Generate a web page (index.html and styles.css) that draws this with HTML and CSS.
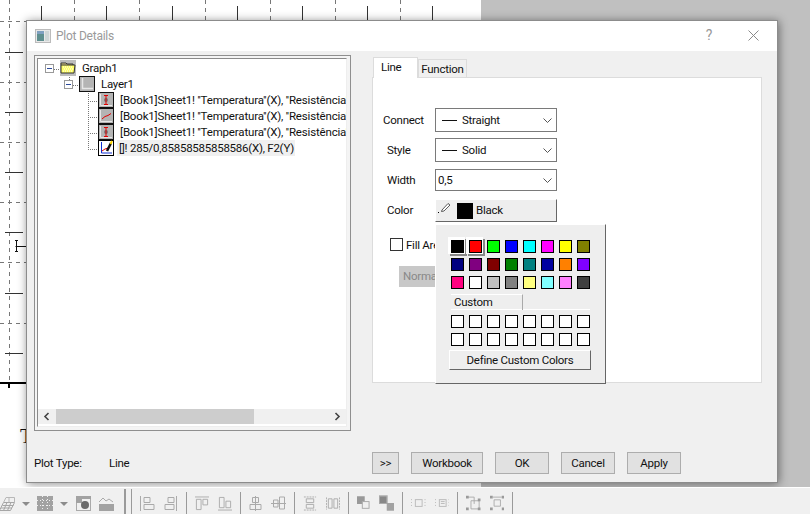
FILE: index.html
```html
<!DOCTYPE html>
<html lang="pt">
<head>
<meta charset="utf-8">
<title>Plot Details</title>
<link rel="stylesheet" href="styles.css">
</head>
<body>
<div class="desktop">
  <div class="workspace">
    <div class="canvas">
      <svg class="plot" width="481" height="487" viewBox="0 0 481 487">
        <g stroke="#777" stroke-dasharray="4 4" fill="none">
          <path d="M9.5 0V383M74.5 0V20M139.5 0V20M205.5 0V20M270.5 0V20M335.5 0V20M400.5 0V20"/>
          <path d="M0 21.5H26M0 82.5H26M0 142.5H26M0 202.5H26M0 262.5H26M0 323.5H26"/>
        </g>
        <g stroke="#333" fill="none">
          <path d="M41.5 6V20M106.5 6V20M172.5 6V20M237.5 6V20M302.5 6V20M367.5 6V20M432.5 6V20"/>
          <path d="M5 52.5H23M5 112.5H23M5 172.5H23M5 232.5H23M5 293.5H23M5 353.5H23"/>
          <path d="M15.5 246.5H26M16.5 240V252M15 240.5H18M15 251.5H18" stroke="#111"/>
        </g>
        <path d="M0 383H26" stroke="#000" stroke-width="2"/>
        <path d="M9 383V388" stroke="#000" stroke-width="2"/>
      </svg>
      <span class="axis-title">T</span>
    </div>

    <div class="dialog">
      <div class="titlebar">
        <svg class="app-icon" width="16" height="14" viewBox="0 0 16 14"><rect x=".5" y=".5" width="15" height="13" fill="#e8e8e8" stroke="#bbb"/><rect x="2" y="2" width="7" height="10" fill="#5f8f8f"/><rect x="2" y="2" width="7" height="3" fill="#7fa0c0"/><rect x="10" y="2" width="4" height="10" fill="#cfd6d6"/></svg>
        <span class="title-text">Plot Details</span>
        <span class="title-help">?</span>
        <svg class="title-close" width="11" height="11" viewBox="0 0 11 11"><path d="M.5 .5L10.5 10.5M10.5 .5L.5 10.5" stroke="#8a8a8a" fill="none"/></svg>
      </div>

      <div class="dialog-body">
        <div class="main-row">
          <div class="tree-frame">
            <div class="tree">
              <svg class="tree-lines" width="120" height="100" viewBox="0 0 120 100">
                <g stroke="#777" stroke-dasharray="1 1" fill="none">
                  <path d="M16 9.5H23M31.5 17V21M35 25.5H42M50.5 33V89M50 41.5H61M50 57.5H61M50 73.5H61M50 89.5H61"/>
                </g>
              </svg>
              <div class="tree-rows">
                <div class="row indent-0">
                  <span class="expander"></span>
                  <svg class="node" width="16" height="16" viewBox="0 0 16 16"><rect width="16" height="16" fill="#bdbdbd"/><path d="M1 5V3H6L7 4H13V5" fill="#e8d98a" stroke="#333"/><path d="M1 13V5H15L14 13Z" fill="#ffff66" stroke="#333"/><path d="M3 7H13M4 9H13M3 11H12" stroke="#fff" stroke-dasharray="1 1"/></svg>
                  <span class="label">Graph1</span>
                </div>
                <div class="row indent-1">
                  <span class="expander"></span>
                  <svg class="node" width="16" height="16" viewBox="0 0 16 16"><rect x=".5" y=".5" width="15" height="15" fill="#b4b4b4" stroke="#111"/><path d="M3.5 2V12.5H14" stroke="#e6e6e6" fill="none" stroke-width="1.5"/></svg>
                  <span class="label">Layer1</span>
                </div>
                <div class="row indent-2">
                  <svg class="node" width="16" height="16" viewBox="0 0 16 16"><rect x=".5" y=".5" width="15" height="15" fill="#b4b4b4" stroke="#111"/><path d="M2.5 2V13.5H14" stroke="#e6e6e6" fill="none"/><circle cx="8" cy="8" r="2" fill="#777"/><path d="M8 3.5V12.5M6 3.5H10M6 12.5H10" stroke="#e00000" fill="none"/></svg>
                  <span class="label wide-text">[Book1]Sheet1! ''Temperatura''(X), ''Resistência''(Y)</span>
                </div>
                <div class="row indent-2">
                  <svg class="node" width="16" height="16" viewBox="0 0 16 16"><rect x=".5" y=".5" width="15" height="15" fill="#b4b4b4" stroke="#111"/><path d="M2.5 2V13.5H14" stroke="#e6e6e6" fill="none"/><path d="M4 11L7 8.5L10 7.5L13 5.5" stroke="#e00000" fill="none"/></svg>
                  <span class="label wide-text">[Book1]Sheet1! ''Temperatura''(X), ''Resistência''(Y)</span>
                </div>
                <div class="row indent-2">
                  <svg class="node" width="16" height="16" viewBox="0 0 16 16"><rect x=".5" y=".5" width="15" height="15" fill="#b4b4b4" stroke="#111"/><path d="M2.5 2V13.5H14" stroke="#e6e6e6" fill="none"/><circle cx="8" cy="8" r="2" fill="#777"/><path d="M8 3.5V12.5M6 3.5H10M6 12.5H10" stroke="#e00000" fill="none"/></svg>
                  <span class="label wide-text">[Book1]Sheet1! ''Temperatura''(X), ''Resistência''(Y)</span>
                </div>
                <div class="row indent-2">
                  <svg class="node" width="16" height="16" viewBox="0 0 16 16"><rect x=".5" y=".5" width="15" height="15" fill="#fff" stroke="#000" stroke-width="1"/><path d="M3.5 2V13H14" stroke="#1030d0" fill="none"/><path d="M4 11L7 9L10 8" stroke="#e00000" fill="none"/><path d="M9 11L13 3" stroke="#111" stroke-width="2.5"/><path d="M12.5 4L14 1" stroke="#ffd800" stroke-width="2"/></svg>
                  <span class="label selected">[]! 285/0,85858585858586(X), F2(Y)</span>
                </div>
              </div>
              <div class="hscroll">
                <svg class="sb-arrow" width="7" height="9" viewBox="0 0 7 9"><path d="M5.5 1L2 4.5L5.5 8" stroke="#444" stroke-width="1.6" fill="none"/></svg>
                <div class="sb-track"><div class="sb-thumb"></div></div>
                <svg class="sb-arrow" width="7" height="9" viewBox="0 0 7 9"><path d="M1.5 1L5 4.5L1.5 8" stroke="#444" stroke-width="1.6" fill="none"/></svg>
              </div>
            </div>
          </div>

          <div class="tabs-area">
            <div class="tab-strip">
              <div class="tab active">Line</div>
              <div class="tab">Function</div>
            </div>
            <div class="tab-panel">
              <div class="form">
                <label class="form-label l-connect">Connect</label>
                <div class="combo"><span class="dash"></span><span class="combo-text">Straight</span><svg class="chev" width="9" height="5" viewBox="0 0 9 5"><path d="M.5 .5L4.5 4.5L8.5 .5" stroke="#555" fill="none"/></svg></div>
                <label class="form-label">Style</label>
                <div class="combo"><span class="dash"></span><span class="combo-text">Solid</span><svg class="chev" width="9" height="5" viewBox="0 0 9 5"><path d="M.5 .5L4.5 4.5L8.5 .5" stroke="#555" fill="none"/></svg></div>
                <label class="form-label l-short">Width</label>
                <div class="combo combo-short"><span class="combo-value">0,5</span><svg class="chev" width="9" height="5" viewBox="0 0 9 5"><path d="M.5 .5L4.5 4.5L8.5 .5" stroke="#555" fill="none"/></svg></div>
                <label class="form-label l-short">Color</label>
                <div class="color-btn">
                  <svg class="pencil" width="14" height="12" viewBox="0 0 14 12"><path d="M4 8L10 1.5L12 3L6 9L3.5 9.5Z" fill="#fff" stroke="#333" stroke-width=".8"/><path d="M0 10.5H1" stroke="#000"/></svg>
                  <span class="color-swatch"></span>
                  <span class="color-name">Black</span>
                </div>
              </div>
              <div class="fill-row">
                <span class="checkbox"></span>
                <span>Fill Area</span>
              </div>
              <div class="normal-btn">Normal</div>
            </div>
          </div>
        </div>

        <div class="footer">
          <div class="plot-type"><span class="pt-label">Plot Type:</span><span>Line</span></div>
          <div class="actions">
            <div class="btn btn-more">&gt;&gt;</div>
            <div class="btn btn-workbook">Workbook</div>
            <div class="btn">OK</div>
            <div class="btn">Cancel</div>
            <div class="btn">Apply</div>
          </div>
        </div>
      </div>

      <div class="popup">
        <div class="swatches">
          <span class="sw c00 raised"></span><span class="sw c01 raised"></span><span class="sw c02"></span><span class="sw c03"></span><span class="sw c04"></span><span class="sw c05"></span><span class="sw c06"></span><span class="sw c07"></span>
          <span class="sw c08"></span><span class="sw c09"></span><span class="sw c10"></span><span class="sw c11"></span><span class="sw c12"></span><span class="sw c13"></span><span class="sw c14"></span><span class="sw c15"></span>
          <span class="sw c16"></span><span class="sw c17"></span><span class="sw c18"></span><span class="sw c19"></span><span class="sw c20"></span><span class="sw c21"></span><span class="sw c22"></span><span class="sw c23"></span>
        </div>
        <div class="custom-head"><span class="custom-tab">Custom</span></div>
        <div class="swatches custom">
          <span class="sw"></span><span class="sw"></span><span class="sw"></span><span class="sw"></span><span class="sw"></span><span class="sw"></span><span class="sw"></span><span class="sw"></span>
          <span class="sw"></span><span class="sw"></span><span class="sw"></span><span class="sw"></span><span class="sw"></span><span class="sw"></span><span class="sw"></span><span class="sw"></span>
        </div>
        <div class="define-btn">Define Custom Colors</div>
      </div>
    </div>
  </div>

  <div class="toolbar">
    <div class="tb-group g-first">
      <svg width="16" height="15" viewBox="0 0 16 15" class="i1"><path d="M.5 14.5L4.5 6.5H15.5L11.5 14.5ZM2 12H13M3.5 9.500H14.500M8 6.500L4.500 14.500M12 6.500L8.500 14.500" fill="none" stroke="#a6a6a6"/><path d="M4.500 6.500L7 1.500H15.500V6.500M10 1.500V6.500" fill="none" stroke="#b8b8b8"/></svg>
      <span class="tb-arrow"></span>
      <svg width="16" height="15" viewBox="0 0 16 15" class="i2"><rect width="16" height="15" fill="#a2a2a2"/><path d="M0 4.5H16M0 9.5H16M5.5 0V15M10.5 0V15" stroke="#f0f0f0" stroke-dasharray="1 2"/></svg>
      <span class="tb-arrow"></span>
      <svg width="15" height="15" viewBox="0 0 15 15" class="i3"><rect x=".5" y=".5" width="14" height="14" fill="#f0f0f0" stroke="#aaa"/><rect width="15" height="3" fill="#a2a2a2"/><rect x="0" y="3" width="6" height="4" fill="#a2a2a2"/><circle cx="9" cy="9" r="4" fill="#6a6a6a"/></svg>
      <svg width="15" height="14" viewBox="0 0 15 14" class="i4"><path d="M0 5L4 1L7 4L10 2L14 5" fill="none" stroke="#aaa"/><rect y="7" width="15" height="7" fill="#a2a2a2"/></svg>
    </div>
    <div class="tb-group g-double"></div>
    <div class="tb-group wide">
      <svg width="15" height="15" viewBox="0 0 15 15" class="al"><path d="M.5 0V15M4 1.5H10V6.5H4ZM4 8.5H14V13.5H4Z" fill="#f0f0f0" stroke="#aaa"/></svg>
      <svg width="13" height="15" viewBox="0 0 13 15" class="al"><path d="M12.5 0V15M4 1.5H10V6.5H4ZM1 8.5H10V13.5H1Z" fill="#f0f0f0" stroke="#aaa"/></svg>
    </div>
    <div class="tb-group">
      <svg width="15" height="15" viewBox="0 0 15 15" class="al"><path d="M0 .5H15M1.5 3H6.5V14H1.5ZM8.5 3H13.5V9H8.5Z" fill="#f0f0f0" stroke="#aaa"/></svg>
      <svg width="15" height="15" viewBox="0 0 15 15" class="al"><path d="M0 14.5H15M1.5 1H6.5V12H1.5ZM8.5 5H13.5V12H8.5Z" fill="#f0f0f0" stroke="#aaa"/></svg>
    </div>
    <div class="tb-group">
      <svg width="13" height="15" viewBox="0 0 13 15" class="al"><path d="M6.5 0V15M3.5 1.5H9.5V6.5H3.5ZM1 8.5H12V13.5H1Z" fill="#f0f0f0" stroke="#aaa"/></svg>
      <svg width="15" height="15" viewBox="0 0 15 15" class="al"><path d="M0 7.5H15M2.5 4H7V11H2.5ZM8.5 1H13.5V13H8.5Z" fill="none" stroke="#aaa"/></svg>
    </div>
    <div class="tb-group">
      <svg width="15" height="15" viewBox="0 0 15 15" class="al"><path d="M1 .5H14M1 14.5H14" stroke="#aaa" stroke-dasharray="2 1"/><path d="M3.5 2.5H11.5V6.5H3.5ZM3.5 8.5H11.5V12.5H3.5Z" fill="none" stroke="#aaa"/></svg>
      <svg width="15" height="15" viewBox="0 0 15 15" class="al"><path d="M.5 1V14M14.5 1V14" stroke="#aaa" stroke-dasharray="2 1"/><path d="M2.5 2.5H6.5V12.5H2.5ZM8.5 2.5H12.5V12.5H8.5Z" fill="none" stroke="#aaa"/></svg>
    </div>
    <div class="tb-group">
      <svg width="13" height="15" viewBox="0 0 13 15" class="al"><rect width="8" height="8" fill="#999"/><rect x="5.5" y="5.5" width="7" height="7" fill="#f0f0f0" stroke="#aaa"/></svg>
      <svg width="16" height="16" viewBox="0 0 16 16" class="al"><rect x=".5" y=".5" width="8" height="8" fill="#f0f0f0" stroke="#aaa"/><rect x="1" y="1" width="7" height="7" fill="#888"/><rect x="8" y="8" width="8" height="8" fill="#a2a2a2"/></svg>
    </div>
    <div class="tb-group wide">
      <svg width="15" height="15" viewBox="0 0 15 15" class="al"><rect x="4.5" y="3.5" width="7" height="7" fill="none" stroke="#bbb"/><path d="M.5 3V11M14.5 3V11" stroke="#bbb" stroke-dasharray="1 2"/></svg>
      <svg width="15" height="15" viewBox="0 0 15 15" class="al"><rect x="4.5" y="3.5" width="7" height="7" fill="none" stroke="#bbb"/><path d="M6 5.5H10M6 7.5H10" stroke="#bbb"/><path d="M.5 3V11M14.5 3V11" stroke="#bbb" stroke-dasharray="1 2"/></svg>
    </div>
    <div class="tb-group wide">
      <svg width="16" height="16" viewBox="0 0 16 16" class="al"><path d="M1.5 1.5H9V9M5.5 5.5H14.5V14.5H5.5Z" fill="none" stroke="#aaa"/><path d="M0 0H3V3H0ZM13 3H16V6H13ZM0 13H3V16H0ZM13 13H16V16H13Z" fill="#9a9a9a"/></svg>
      <svg width="16" height="16" viewBox="0 0 16 16" class="al"><path d="M3 1.5H13M4.5 4.5H11.5V11.5H4.5Z" fill="none" stroke="#aaa"/><path d="M0 0H3V3H0ZM13 0H16V3H13ZM0 13H3V16H0ZM13 13H16V16H13Z" fill="#9a9a9a"/></svg>
    </div>
  </div>
</div>
</body>
</html>
```

FILE: styles.css
```css
* { box-sizing: border-box; }
html, body { margin: 0; padding: 0; }
body {
  font-family: Roboto, "Liberation Sans", sans-serif;
  font-size: 11.5px;
  letter-spacing: -.25px;
  color: #111;
}
.desktop {
  width: 810px;
  height: 514px;
  overflow: hidden;
  display: flex;
  flex-direction: column;
  background: #f0f0f0;
}
.workspace {
  position: relative;
  height: 487px;
  flex: none;
  background: #c0c0c0;
  overflow: hidden;
}
.canvas {
  position: relative;
  width: 481px;
  height: 487px;
  background: #fff;
  overflow: hidden;
}
.plot { display: block; }
.axis-title {
  position: absolute;
  left: 20px;
  top: 424px;
  font-family: "Liberation Serif", serif;
  font-size: 21px;
  color: #111;
}

/* dialog */
.dialog {
  position: absolute;
  left: 26px;
  top: 20px;
  width: 752px;
  height: 463px;
  background: #f0f0f0;
  border: 1px solid #8c8c8c;
  box-shadow: 1px 1px 9px rgba(0, 0, 0, .45);
  display: flex;
  flex-direction: column;
}
.titlebar {
  flex: none;
  height: 30px;
  background: #fff;
  display: flex;
  align-items: center;
  padding: 0 18px 0 8px;
}
.app-icon { flex: none; }
.title-text { margin-left: 5px; color: #9a9a9a; font-size: 12px; }
.title-help { margin: -2px 36px 0 auto; color: #999; font-size: 14px; }
.title-close { flex: none; margin-top: -2px; }
.dialog-body {
  flex: 1;
  padding: 4px 15px 0 7px;
  display: flex;
  flex-direction: column;
}
.main-row { display: flex; gap: 21px; height: 376px; flex: none; }

/* tree */
.tree-frame {
  width: 317px;
  flex: none;
  border: 1px solid #8f8f8f;
  padding: 2px 3px 3px 2px;
  background: #f4f4f4;
}
.tree {
  position: relative;
  height: 100%;
  border: 1px solid #8a8a8a;
  border-right-color: #eee;
  border-bottom-color: #eee;
  background: #fff;
  display: flex;
  flex-direction: column;
  overflow: hidden;
}
.tree-lines { position: absolute; left: 0; top: 1px; }
.tree-rows {
  position: relative;
  flex: 1;
  padding-top: 1px;
  overflow: hidden;
}
.row { height: 16px; display: flex; align-items: center; white-space: nowrap; }
.indent-0 { padding-left: 7px; }
.indent-1 { padding-left: 26px; }
.indent-2 { padding-left: 60px; }
.expander {
  position: relative;
  flex: none;
  width: 9px;
  height: 9px;
  margin-right: 6px;
  border: 1px solid #999;
  background: #fff;
}
.expander::after {
  content: "";
  position: absolute;
  left: 1px;
  top: 3px;
  width: 5px;
  height: 1px;
  background: #2b4a9b;
}
.node { flex: none; position: relative; }
.label { margin-left: 5px; padding-left: 1px; line-height: 16px; }
.wide-text { letter-spacing: -.17px; }
.selected { background: #f0f0f0; margin-left: 3px; padding: 0 1px 0 2px; }
.hscroll {
  flex: none;
  height: 15px;
  margin-bottom: 2px;
  background: #f0f0f0;
  display: flex;
  align-items: center;
  padding: 0 5px;
}
.sb-arrow { flex: none; }
.sb-track { flex: 1; height: 15px; margin: 0 2px 0 6px; }
.sb-thumb { width: 198px; height: 15px; background: #cdcdcd; }

/* tabs */
.tabs-area { width: 390px; flex: none; padding-top: 2px; }
.tab-strip { display: flex; align-items: flex-end; height: 21px; padding-left: 1px; position: relative; z-index: 1; }
.tab {
  height: 18px;
  padding: 0 2px;
  border: 1px solid #dcdcdc;
  border-bottom: 0;
  background: #f0f0f0;
  line-height: 18px;
  width: 49px;
  text-align: center;
  margin-bottom: 1px;
}
.tab.active {
  width: 45px;
  height: 21px;
  background: #fff;
  line-height: 18px;
  margin-bottom: 0;
  text-align: left;
  padding-left: 7px;
}
.tab-panel {
  height: 306px;
  margin-top: -1px;
  background: #fff;
  border: 1px solid #dcdcdc;
  position: relative;
  padding: 30px 0 0 10px;
}
.form {
  display: grid;
  grid-template-columns: 52px 122px;
  grid-template-rows: 24px 25px 24px 23px;
  row-gap: 6px;
  align-items: start;
}
.form-label { padding-left: 4px; white-space: nowrap; line-height: 24px; }
.l-connect { padding-left: 0; }
.l-short { line-height: 22px; }
.combo {
  height: 24px;
  border: 1px solid #7a7a7a;
  background: #fff;
  display: flex;
  align-items: center;
  padding: 0 4px 0 6px;
}
.combo-short { height: 22px; padding-left: 2px; }
.dash { width: 15px; height: 1px; background: #111; flex: none; }
.combo-text { margin-left: 5px; }
.chev { margin-left: auto; flex: none; }
.color-btn {
  height: 23px;
  border: 1px solid;
  border-color: #fff #666 #666 #fff;
  background: #eee;
  display: flex;
  align-items: center;
  padding-left: 2px;
}
.pencil { flex: none; margin-top: -6px; }
.color-swatch { width: 16px; height: 16px; background: #000; margin: 0 3px 0 5px; flex: none; }
.color-name { margin-top: -2px; }
.fill-row {
  display: flex;
  align-items: center;
  gap: 3px;
  height: 13px;
  margin: 16px 0 0 7px;
  white-space: nowrap;
}
.checkbox { width: 13px; height: 13px; border: 1px solid #333; background: #fff; flex: none; }
.normal-btn {
  width: 60px;
  height: 21px;
  margin: 15px 0 0 16px;
  background: #c8c8c8;
  color: #888;
  line-height: 21px;
  padding-left: 4px;
}

/* footer */
.footer {
  margin-top: 21px;
  height: 22px;
  display: flex;
  align-items: center;
}
.plot-type { display: flex; width: 338px; }
.pt-label { width: 75px; }
.actions { display: flex; gap: 12px; }
.btn {
  width: 54px;
  height: 22px;
  background: #e1e1e1;
  border: 1px solid #adadad;
  text-align: center;
  line-height: 20px;
}
.btn-more { width: 27px; }
.btn-workbook { width: 72px; }

/* colour popup */
.popup {
  position: absolute;
  left: 408px;
  top: 203px;
  width: 171px;
  height: 160px;
  background: #eee;
  border: 1px solid;
  border-color: #fff #666 #666 #fff;
  padding: 15px 0 0 15px;
}
.swatches {
  display: grid;
  grid-template-columns: repeat(8, 13px);
  grid-auto-rows: 13px;
  gap: 5px;
}
.sw { border: 1px solid #000; background: #fff; }
.raised { box-shadow: -1px -1px 0 2px #fff, 1px 1px 0 2px #888; }
.c00 { background: #000; }
.c01 { background: #f00; }
.c02 { background: #0f0; }
.c03 { background: #00f; }
.c04 { background: #0ff; }
.c05 { background: #f0f; }
.c06 { background: #ff0; }
.c07 { background: #808000; }
.c08 { background: #000080; }
.c09 { background: #800080; }
.c10 { background: #800000; }
.c11 { background: #008000; }
.c12 { background: #008080; }
.c13 { background: #0000a0; }
.c14 { background: #ff8000; }
.c15 { background: #8000ff; }
.c16 { background: #ff0080; }
.c17 { background: #fff; }
.c18 { background: #c0c0c0; }
.c19 { background: #808080; }
.c20 { background: #ffff80; }
.c21 { background: #80ffff; }
.c22 { background: #ff80ff; }
.c23 { background: #404040; }
.custom-head {
  width: 139px;
  height: 16px;
  margin-top: 5px;
  border-bottom: 1px solid #fff;
}
.custom-tab {
  display: block;
  width: 72px;
  height: 16px;
  padding-left: 3px;
  line-height: 15px;
  border-top: 1px solid #fff;
  border-right: 1px solid #aaa;
}
.custom { margin-top: 5px; }
.define-btn {
  width: 142px;
  height: 20px;
  margin: 4px 0 0 -2px;
  border: 1px solid;
  border-color: #fff #666 #666 #fff;
  text-align: center;
  line-height: 18px;
  background: #eee;
}

/* toolbar */
.toolbar {
  position: relative;
  flex: 1;
  border-top: 1px solid #fff;
  background: #f0f0f0;
  display: flex;
  align-items: flex-end;
}
.tb-group {
  height: 22px;
  border-right: 1px solid #9a9a9a;
  display: flex;
  align-items: center;
  gap: 9px;
  padding: 0 8px;
  width: 54px;
  flex: none;
}
.tb-group.wide { width: 55px; }
.tb-group.g-first { width: 125px; height: 25px; padding: 4px 0 0; gap: 7px; }
.tb-group.g-double { width: 7px; height: 25px; padding: 0; border-left: 1px solid #9a9a9a; }
.tb-arrow {
  width: 0;
  height: 0;
  border: 4px solid transparent;
  border-top: 4px solid #8c8c8c;
  border-bottom: 0;
  flex: none;
}
.i1 { margin-left: -1px; }
.i3 { margin-left: 1px; }
.i4 { margin-left: 1px; }
```
